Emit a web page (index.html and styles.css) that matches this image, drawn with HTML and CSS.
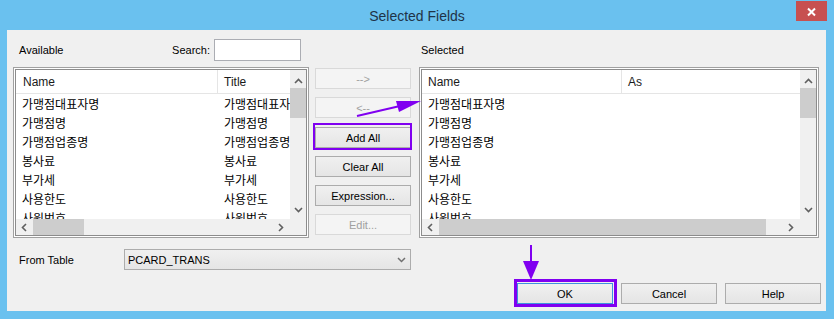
FILE: index.html
```html
<!DOCTYPE html>
<html lang="ko">

<head>
    <meta charset="UTF-8">
    <meta name="viewport" content="width=device-width, initial-scale=1.0">
    <title>Selected Fields</title>
    <link rel="stylesheet" href="styles.css">
</head>

<body>
    <div class="window">
        <div class="titlebar">
            <span class="title">Selected Fields</span>
            <button class="close" type="button">
                <svg width="31" height="20" viewBox="0 0 31 20">
                    <path d="M12 7.5 L19 14.5 M19 7.5 L12 14.5" stroke="#fff" stroke-width="2" />
                </svg>
            </button>
        </div>

        <div class="client">
            <div class="lists">
                <!-- available fields -->
                <div class="panel left">
                    <div class="panel-head">
                        <span class="caption">Available</span>
                        <label class="search">Search: <input type="text"></label>
                    </div>
                    <div class="listbox">
                        <div class="list-inner">
                            <div class="list-content">
                                <div class="row head">
                                    <div class="cell">Name</div>
                                    <div class="cell">Title</div>
                                </div>
                                <div class="row"><div class="cell">가맹점대표자명</div><div class="cell">가맹점대표자명</div></div>
                                <div class="row"><div class="cell">가맹점명</div><div class="cell">가맹점명</div></div>
                                <div class="row"><div class="cell">가맹점업종명</div><div class="cell">가맹점업종명</div></div>
                                <div class="row"><div class="cell">봉사료</div><div class="cell">봉사료</div></div>
                                <div class="row"><div class="cell">부가세</div><div class="cell">부가세</div></div>
                                <div class="row"><div class="cell">사용한도</div><div class="cell">사용한도</div></div>
                                <div class="row"><div class="cell">사원번호</div><div class="cell">사원번호</div></div>
                            </div>
                            <div class="vscroll">
                                <div class="arrow up"><svg width="9" height="6" viewBox="0 0 9 6"><polyline points="1,5 4.5,1.5 8,5" fill="none" stroke="#606060" stroke-width="1.6" /></svg></div>
                                <div class="track"><div class="thumb"></div></div>
                                <div class="arrow down"><svg width="9" height="6" viewBox="0 0 9 6"><polyline points="1,1 4.5,4.5 8,1" fill="none" stroke="#606060" stroke-width="1.6" /></svg></div>
                            </div>
                            <div class="hscroll">
                                <div class="arrow back"><svg width="6" height="9" viewBox="0 0 6 9"><polyline points="5,1 1.5,4.5 5,8" fill="none" stroke="#606060" stroke-width="1.6" /></svg></div>
                                <div class="track"><div class="thumb short"></div></div>
                                <div class="arrow fwd"><svg width="6" height="9" viewBox="0 0 6 9"><polyline points="1,1 4.5,4.5 1,8" fill="none" stroke="#606060" stroke-width="1.6" /></svg></div>
                            </div>
                            <div class="corner"></div>
                        </div>
                    </div>
                </div>

                <!-- move buttons -->
                <div class="moves">
                    <button class="btn" type="button" disabled>--&gt;</button>
                    <button class="btn" type="button" disabled>&lt;--</button>
                    <button class="btn add-all" type="button">Add All</button>
                    <button class="btn" type="button">Clear All</button>
                    <button class="btn" type="button">Expression...</button>
                    <button class="btn" type="button" disabled>Edit...</button>
                </div>

                <!-- selected fields -->
                <div class="panel right">
                    <div class="panel-head">
                        <span class="caption">Selected</span>
                    </div>
                    <div class="listbox">
                        <div class="list-inner">
                            <div class="list-content">
                                <div class="row head">
                                    <div class="cell">Name</div>
                                    <div class="cell">As</div>
                                </div>
                                <div class="row"><div class="cell">가맹점대표자명</div><div class="cell"></div></div>
                                <div class="row"><div class="cell">가맹점명</div><div class="cell"></div></div>
                                <div class="row"><div class="cell">가맹점업종명</div><div class="cell"></div></div>
                                <div class="row"><div class="cell">봉사료</div><div class="cell"></div></div>
                                <div class="row"><div class="cell">부가세</div><div class="cell"></div></div>
                                <div class="row"><div class="cell">사용한도</div><div class="cell"></div></div>
                                <div class="row"><div class="cell">사원번호</div><div class="cell"></div></div>
                            </div>
                            <div class="vscroll">
                                <div class="arrow up"><svg width="9" height="6" viewBox="0 0 9 6"><polyline points="1,5 4.5,1.5 8,5" fill="none" stroke="#606060" stroke-width="1.6" /></svg></div>
                                <div class="track"><div class="thumb"></div></div>
                                <div class="arrow down"><svg width="9" height="6" viewBox="0 0 9 6"><polyline points="1,1 4.5,4.5 8,1" fill="none" stroke="#606060" stroke-width="1.6" /></svg></div>
                            </div>
                            <div class="hscroll">
                                <div class="arrow back"><svg width="6" height="9" viewBox="0 0 6 9"><polyline points="5,1 1.5,4.5 5,8" fill="none" stroke="#606060" stroke-width="1.6" /></svg></div>
                                <div class="track"><div class="thumb long"></div></div>
                                <div class="arrow fwd"><svg width="6" height="9" viewBox="0 0 6 9"><polyline points="1,1 4.5,4.5 1,8" fill="none" stroke="#606060" stroke-width="1.6" /></svg></div>
                            </div>
                            <div class="corner"></div>
                        </div>
                    </div>
                </div>
            </div>

            <div class="from-row">
                <span>From Table</span>
                <div class="combo">
                    <span>PCARD_TRANS</span>
                    <svg width="9" height="6" viewBox="0 0 9 6"><polyline points="1,1 4.5,4.5 8,1" fill="none" stroke="#707070" stroke-width="1.5" /></svg>
                </div>
            </div>

            <div class="actions">
                <button class="btn default" type="button">OK</button>
                <button class="btn" type="button">Cancel</button>
                <button class="btn" type="button">Help</button>
            </div>
        </div>
    </div>

    <!-- hand drawn marks over the dialog -->
    <svg class="marks" width="834" height="319" viewBox="0 0 834 319">
        <rect x="314" y="124" width="97" height="25" fill="none" stroke="#8000f0" stroke-width="2" />
        <line x1="357" y1="116" x2="400" y2="106" stroke="#8000f0" stroke-width="2" />
        <polygon points="396,101 399,112 421,101" fill="#8000f0" />
        <rect x="515.5" y="280.5" width="100" height="25" fill="none" stroke="#8000f0" stroke-width="3" />
        <line x1="531" y1="245" x2="531" y2="263" stroke="#8000f0" stroke-width="2" />
        <polygon points="523,261 539,261 531,280" fill="#8000f0" />
    </svg>
</body>

</html>
```

FILE: styles.css
```css
/* page */
body {
    margin: 0;
    position: relative;
    font-family: "Liberation Sans", Arial, "Noto Sans CJK KR", sans-serif;
    font-size: 11px;
    color: #000;
}

.window {
    width: 834px;
    height: 319px;
    background-color: #6ac1ef;
    box-sizing: border-box;
    overflow: hidden;
}

/* title bar */
.titlebar {
    height: 30px;
    display: grid;
    grid-template-columns: 1fr auto 1fr;
}

.title {
    grid-column: 2;
    font-size: 14px;
    line-height: 32px;
    color: #1f3347;
}

.close {
    grid-column: 3;
    justify-self: end;
    align-self: start;
    width: 31px;
    height: 20px;
    margin: 1px 7px 0 0;
    padding: 0;
    border: none;
    background-color: #c75050;
    display: flex;
}

/* dialog body */
.client {
    height: 281px;
    margin: 0 8px 0 7px;
    padding: 9px 7px 0 6px;
    box-sizing: border-box;
    background-color: #f0f0f0;
}

.lists {
    display: flex;
}

.panel.left {
    width: 296px;
}

.panel.right {
    width: 400px;
    margin-left: 8px;
}

.panel-head {
    height: 22px;
    display: flex;
    align-items: center;
    margin-bottom: 6px;
}

.left .caption {
    padding-left: 6px;
}

.right .caption {
    padding-left: 2px;
}

.search {
    margin-left: auto;
    margin-right: 8px;
    display: flex;
    align-items: center;
}

.search input {
    width: 87px;
    height: 22px;
    margin: 0 0 0 4px;
    box-sizing: border-box;
    border: 1px solid #abadb3;
    background: #fff;
}

/* list view */
.listbox {
    height: 171px;
    box-sizing: border-box;
    border: 1px solid #a0a0a0;
    padding: 1px;
    background-color: #fff;
}

.list-inner {
    height: 100%;
    box-sizing: border-box;
    border: 1px solid #8c8c8c;
    display: grid;
    grid-template-columns: 1fr 16px;
    grid-template-rows: 1fr 16px;
}

.list-content {
    overflow: hidden;
    background: #fff;
}

.row {
    display: grid;
    height: 19px;
    line-height: 19px;
    font-size: 12px;
    font-family: "Noto Sans CJK KR", "Liberation Sans", sans-serif;
}

.left .row {
    grid-template-columns: 202px 1fr;
}

.right .row {
    grid-template-columns: 200px 1fr;
}

.row.head {
    height: 23px;
    line-height: 24px;
    border-bottom: 1px solid #e5e5e5;
    font-family: "Liberation Sans", Arial, sans-serif;
    color: #1a1a1a;
}

.row.head .cell:first-child {
    border-right: 1px solid #e5e5e5;
}

.cell {
    padding-left: 6px;
    white-space: nowrap;
    overflow: hidden;
}

.left .row.head .cell:first-child {
    padding-left: 7px;
}

/* scroll bars */
.vscroll,
.hscroll,
.corner {
    background-color: #f0f0f0;
}

.vscroll {
    display: flex;
    flex-direction: column;
}

.vscroll .arrow {
    height: 17px;
    display: flex;
    justify-content: center;
}

.vscroll .arrow.up {
    align-items: flex-end;
    height: 14px;
    padding-bottom: 3px;
}

.vscroll .arrow.down {
    align-items: flex-start;
    padding-top: 5px;
    height: 12px;
}

.vscroll .track {
    flex: 1;
}

.vscroll .thumb {
    height: 30px;
    margin-top: 1px;
    background-color: #cdcdcd;
}

.hscroll {
    display: flex;
}

.hscroll .arrow {
    width: 17px;
    display: flex;
    align-items: center;
}

.hscroll .arrow.back {
    justify-content: flex-start;
    padding-left: 5px;
    width: 12px;
}

.hscroll .arrow.fwd {
    justify-content: flex-end;
    padding-right: 6px;
    width: 11px;
}

.hscroll .track {
    flex: 1;
    display: flex;
}

.hscroll .thumb {
    background-color: #cdcdcd;
}

.thumb.short {
    width: 51px;
}

.thumb.long {
    width: 327px;
}

/* buttons */
.btn {
    height: 21px;
    width: 96px;
    padding: 0;
    box-sizing: border-box;
    border: 1px solid #acacac;
    background: linear-gradient(#f0f0f0, #e5e5e5);
    font-family: "Liberation Sans", Arial, sans-serif;
    font-size: 11px;
    color: #000;
}

.btn:disabled {
    border-color: #d9d9d9;
    background: #f4f4f4;
    color: #a0a0a0;
}

.btn.default {
    border-color: #3c93dd;
}

.moves {
    margin-left: 6px;
    padding-top: 29px;
    display: flex;
    flex-direction: column;
    gap: 8px;
}

.moves .add-all {
    margin-top: 1px;
}

/* from table row */
.from-row {
    margin-top: 11px;
    display: grid;
    grid-template-columns: 105px 287px;
    align-items: center;
    padding-left: 6px;
}

.combo {
    height: 21px;
    box-sizing: border-box;
    border: 1px solid #acacac;
    background: linear-gradient(#f0f0f0, #e5e5e5);
    display: flex;
    align-items: center;
    justify-content: space-between;
    padding: 0 4px 0 3px;
}

/* dialog buttons */
.actions {
    margin-top: 13px;
    margin-right: -2px;
    display: flex;
    justify-content: flex-end;
    gap: 8px;
}

/* annotation marks */
.marks {
    position: absolute;
    top: 0;
    left: 0;
    pointer-events: none;
}
```
